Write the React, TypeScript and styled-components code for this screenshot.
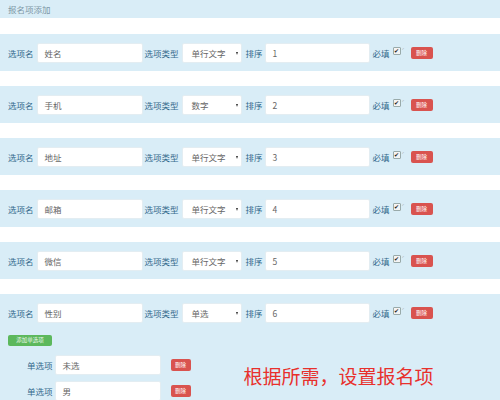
import React from "react";
import styled, { createGlobalStyle } from "styled-components";

const Global = createGlobalStyle`
  html, body { margin: 0; padding: 0; background: #ffffff; }
  body { font-family: "Noto Sans CJK SC", "Noto Sans", sans-serif; width: 500px; height: 400px; overflow: hidden; }
`;

const Page = styled.div`
  display: flex;
  flex-direction: column;
  width: 500px;
  height: 400px;
`;

const Header = styled.div`
  height: 22px;
  background: #d9edf7;
  display: flex;
  align-items: center;
  padding-left: 8px;
  font-size: 8.5px;
  color: #7d97a6;
  margin-bottom: 16px;
`;

const Band = styled.div<{ $last?: boolean }>`
  background: #d9edf7;
  padding: 9px 0 0 8px;
  height: ${(p) => (p.$last ? "auto" : "37px")};
  flex: ${(p) => (p.$last ? "1" : "none")};
  margin-bottom: ${(p) => (p.$last ? "0" : "15px")};
  box-sizing: border-box;
`;

const Row = styled.div`
  display: flex;
  align-items: center;
  height: 20px;
`;

const Label = styled.span<{ $ml?: number; $mr?: number }>`
  font-size: 8.5px;
  color: #33698c;
  margin-left: ${(p) => p.$ml ?? 0}px;
  margin-right: ${(p) => p.$mr ?? 0}px;
  white-space: nowrap;
`;

const TextBox = styled.div<{ $w: number }>`
  width: ${(p) => p.$w}px;
  height: 20px;
  box-sizing: border-box;
  background: #fff;
  border: 1px solid #e3edf2;
  border-radius: 2px;
  display: flex;
  align-items: center;
  padding-left: 7px;
  font-size: 8.5px;
  color: #666;
  font-family: "Noto Sans CJK SC", "Liberation Sans", sans-serif;
`;

const Select = styled.div`
  width: 60px;
  height: 20px;
  box-sizing: border-box;
  background: #fff;
  border: 1px solid #e3edf2;
  border-radius: 2px;
  display: flex;
  align-items: center;
  justify-content: space-between;
  padding: 0 3px 0 9px;
  font-size: 8.5px;
  color: #666;
`;

const Caret = styled.span`
  width: 0;
  height: 0;
  border-left: 1.5px solid transparent;
  border-right: 1.5px solid transparent;
  border-top: 3px solid #333;
`;

const Check = styled.span`
  width: 6px;
  height: 6px;
  border: 1px solid #9aa;
  background: #f4f4f4;
  border-radius: 1px;
  margin-left: 3px;
  margin-top: -5px;
  display: inline-flex;
  align-items: center;
  justify-content: center;
  font-size: 6px;
  line-height: 6px;
  color: #222;
`;

const Tick = styled.span`
  font-size: 5px;
  color: #999;
  margin-left: 1px;
  margin-top: -7px;
`;

const RedBtn = styled.span<{ $ml: number; $w?: number }>`
  display: inline-flex;
  align-items: center;
  justify-content: center;
  width: ${(p) => p.$w ?? 22}px;
  height: 12px;
  background: #d9534f;
  border-radius: 2px;
  color: #fff;
  font-size: 5.5px;
  margin-left: ${(p) => p.$ml}px;
`;

const GreenBtn = styled.div`
  display: inline-flex;
  align-items: center;
  justify-content: center;
  width: 44px;
  height: 11px;
  margin-top: 7px;
  background: #5cb85c;
  border-radius: 2px;
  color: #eaf7ea;
  font-size: 5.5px;
`;

const Lower = styled.div`
  display: flex;
  align-items: center;
  margin-top: 8px;
`;

const Options = styled.div`
  display: flex;
  flex-direction: column;
  gap: 7px;
  padding-left: 19px;
`;

const OptionRow = styled.div`
  display: flex;
  align-items: center;
  height: 19px;
`;

const Note = styled.div`
  margin-left: 53px;
  margin-top: -4px;
  font-size: 19px;
  color: #e8302c;
  white-space: nowrap;
`;

type Item = { name: string; type: string; order: string };

const items: Item[] = [
  { name: "姓名", type: "单行文字", order: "1" },
  { name: "手机", type: "数字", order: "2" },
  { name: "地址", type: "单行文字", order: "3" },
  { name: "邮箱", type: "单行文字", order: "4" },
  { name: "微信", type: "单行文字", order: "5" },
  { name: "性别", type: "单选", order: "6" },
];

const FieldRow = ({ item }: { item: Item }) => (
  <Row>
    <Label $mr={3}>选项名</Label>
    <TextBox $w={106}>{item.name}</TextBox>
    <Label $ml={2} $mr={3}>选项类型</Label>
    <Select>
      <span>{item.type}</span>
      <Caret />
    </Select>
    <Label $ml={4} $mr={2}>排序</Label>
    <TextBox $w={105}>{item.order}</TextBox>
    <Label $ml={3}>必填</Label>
    <Check>✔</Check>
    <Tick>ˊ</Tick>
    <RedBtn $ml={6}>删除</RedBtn>
  </Row>
);

export default function App() {
  return (
    <Page>
      <Global />
      <Header>报名项添加</Header>
      {items.slice(0, 5).map((it) => (
        <Band key={it.order}>
          <FieldRow item={it} />
        </Band>
      ))}
      <Band $last>
        <FieldRow item={items[5]} />
        <GreenBtn>添加单选项</GreenBtn>
        <Lower>
          <Options>
            {["未选", "男"].map((o) => (
              <OptionRow key={o}>
                <Label $mr={2}>单选项</Label>
                <TextBox $w={106}>{o}</TextBox>
                <RedBtn $ml={10} $w={20}>删除</RedBtn>
              </OptionRow>
            ))}
          </Options>
          <Note>根据所需，设置报名项</Note>
        </Lower>
      </Band>
    </Page>
  );
}
